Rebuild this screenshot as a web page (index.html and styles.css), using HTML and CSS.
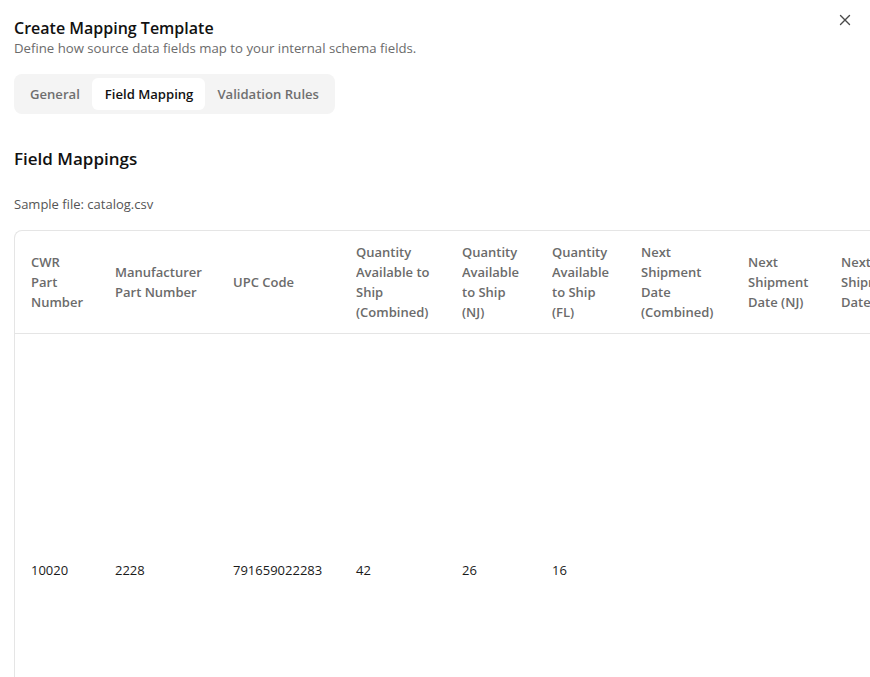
FILE: index.html
```html
<!DOCTYPE html>
<html lang="en">
<head>
<meta charset="utf-8">
<title>Create Mapping Template</title>
<link rel="stylesheet" href="styles.css">
</head>
<body>
<div class="dialog">
  <button class="close" aria-label="Close">
    <svg width="12" height="12" viewBox="0 0 12 12"><path d="M1.5 1.5 L10.5 10.5 M10.5 1.5 L1.5 10.5" stroke="#4a4a4a" stroke-width="1.4" stroke-linecap="round" fill="none"/></svg>
  </button>
  <header class="head">
    <h1 class="title">Create Mapping Template</h1>
    <p class="subtitle">Define how source data fields map to your internal schema fields.</p>
  </header>
  <nav class="tabs">
    <span class="tab">General</span>
    <span class="tab active">Field Mapping</span>
    <span class="tab">Validation Rules</span>
  </nav>
  <h2 class="section">Field Mappings</h2>
  <p class="sample">Sample file: catalog.csv</p>
  <div class="card">
    <table class="grid">
      <colgroup>
        <col class="c1"><col class="c2"><col class="c3"><col class="c4"><col class="c5"><col class="c6"><col class="c7"><col class="c8"><col class="c9">
      </colgroup>
      <thead>
        <tr>
          <th>CWR<br>Part<br>Number</th>
          <th>Manufacturer<br>Part Number</th>
          <th>UPC Code</th>
          <th>Quantity<br>Available to<br>Ship<br>(Combined)</th>
          <th>Quantity<br>Available<br>to Ship<br>(NJ)</th>
          <th>Quantity<br>Available<br>to Ship<br>(FL)</th>
          <th>Next<br>Shipment<br>Date<br>(Combined)</th>
          <th>Next<br>Shipment<br>Date (NJ)</th>
          <th>Next<br>Shipment<br>Date (FL)</th>
        </tr>
      </thead>
      <tbody>
        <tr class="row">
          <td>10020</td>
          <td>2228</td>
          <td>791659022283</td>
          <td>42</td>
          <td>26</td>
          <td>16</td>
          <td></td>
          <td></td>
          <td></td>
        </tr>
      </tbody>
    </table>
  </div>
</div>
</body>
</html>
```

FILE: styles.css
```css
* { box-sizing: border-box; }
html, body {
  margin: 0;
  padding: 0;
  background: #ffffff;
  overflow: hidden;
}
body {
  font-family: "Open Sans", "Noto Sans", sans-serif;
  font-size: 13px;
  color: #1a1a1a;
  width: 870px;
  height: 677px;
}
.dialog {
  position: relative;
  padding: 18px 0 0 14px;
  height: 677px;
  overflow: hidden;
}
.close {
  position: absolute;
  top: 14px;
  right: 19px;
  width: 12px;
  height: 12px;
  padding: 0;
  border: 0;
  background: none;
  display: flex;
}
.head { margin: 0; }
.title {
  margin: 0;
  font-size: 16px;
  line-height: 20px;
  font-weight: 600;
  color: #111;
}
.subtitle {
  margin: 0;
  font-size: 13.2px;
  line-height: 20px;
  color: #6b6b6b;
}
.tabs {
  display: inline-flex;
  margin-top: 16px;
  padding: 4px;
  background: #f4f4f4;
  border-radius: 8px;
  height: 40px;
}
.tab {
  display: flex;
  align-items: center;
  padding: 0 12px;
  height: 32px;
  border-radius: 6px;
  font-weight: 600;
  font-size: 13.1px;
  color: #6f6f6f;
}
.tab.active {
  background: #ffffff;
  color: #111;
  padding: 0 12px 0 13px;
}
.section {
  margin: 31px 0 0;
  font-size: 17px;
  line-height: 28px;
  font-weight: 600;
  color: #111;
}
.sample {
  margin: 21px 0 0;
  font-size: 13px;
  line-height: 20px;
  color: #555;
}
.card {
  margin-top: 16px;
  border: 1px solid #e5e5e5;
  border-right: 0;
  border-radius: 8px 0 0 0;
  width: 1000px;
}
.grid {
  border-collapse: collapse;
  table-layout: fixed;
  width: 900px;
}
.c1 { width: 100px; }
.c2 { width: 118px; }
.c3 { width: 123px; }
.c4 { width: 106px; }
.c5 { width: 90px; }
.c6 { width: 89px; }
.c7 { width: 107px; }
.c8 { width: 93px; }
.c9 { width: 74px; }
th {
  text-align: left;
  font-weight: 600;
  font-size: 13px;
  line-height: 20px;
  color: #6b6b6b;
  padding: 11px 0 11px 0;
  border-bottom: 1px solid #e5e5e5;
  vertical-align: middle;
  white-space: nowrap;
  overflow: hidden;
}
th:first-child, td:first-child { padding-left: 16px; }
td {
  padding: 0 16px 0 0;
  font-size: 13px;
  line-height: 20px;
  color: #1a1a1a;
  vertical-align: middle;
}
.row { height: 472px; }
```
